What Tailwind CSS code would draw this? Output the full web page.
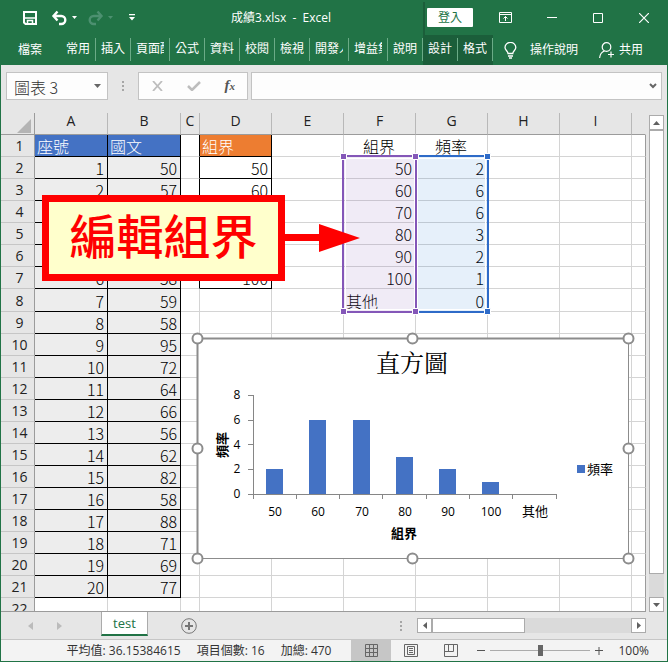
<!DOCTYPE html>
<html lang="zh-Hant">
<head>
  <meta charset="UTF-8">
  <meta name="viewport" content="width=device-width, initial-scale=1.0">
  <title>成績3.xlsx - Excel</title>
  <script src="https://cdn.jsdelivr.net/npm/@tailwindcss/browser@4"></script>
</head>
<body class="h-screen min-h-[640px] flex flex-col overflow-hidden border border-t-0 border-[#217346] bg-[#e6e6e6] font-['Open_Sans','Noto_Sans_CJK_TC',sans-serif] text-[12px] text-[#333]">

  <header class="bg-[#217346] text-white">
    <!-- Title bar -->
    <div class="flex items-center h-[35px]">
      <div class="flex items-center pl-[21px]">
        <button aria-label="儲存檔案" class="mr-[13px]">
          <svg width="16" height="16" viewBox="0 0 16 16" fill="none" stroke="#fff" stroke-width="2"><path d="M2 2h12v12H3.500L2 12.500z"/><path d="M2 8h12" stroke-width="1.500"/><path d="M5.500 14v-3.500h5V14" stroke-width="1.500"/></svg>
        </button>
        <button aria-label="復原" class="flex items-center gap-1 mr-[10px]">
          <svg width="17" height="16" viewBox="0 0 17 16" fill="none" stroke="#fff" stroke-width="2.400"><path d="M6.500 1.500L2.500 6l4 4.500M2.500 6h7.800a4 4 0 0 1 0 8H8"/></svg>
          <svg width="5" height="3" viewBox="0 0 5 3" fill="#fff"><path d="M0 0h5L2.500 3z"/></svg>
        </button>
        <button aria-label="重做" class="flex items-center gap-1 mr-4" disabled>
          <svg width="17" height="16" viewBox="0 0 17 16" fill="none" stroke="#4c9070" stroke-width="2.400"><path d="M10.500 1.500l4 4.500-4 4.500M14.500 6H6.700a4 4 0 0 0 0 8H9"/></svg>
          <svg width="5" height="3" viewBox="0 0 5 3" fill="#4c9070"><path d="M0 0h5L2.500 3z"/></svg>
        </button>
        <button aria-label="自訂快速存取工具列">
          <svg width="6" height="7" viewBox="0 0 6 7" fill="#fff"><path d="M0 0h6v1.300H0zM0 3h6L3 6.500z"/></svg>
        </button>
      </div>
      <h1 class="flex-1 pl-1 text-center whitespace-nowrap">成績3.xlsx&nbsp; -&nbsp; Excel</h1>
      <div class="flex items-center justify-end self-stretch">
        <span class="w-[2px] h-[33px] mt-[2px] mr-[2px] bg-[#1b5e3a]"></span>
        <button class="w-[46px] h-[19px] bg-white text-[#217346] leading-[19px] rounded-[1px]">登入</button>
        <button aria-label="功能區顯示選項" class="ml-[26px]">
          <svg width="13" height="11" viewBox="0 0 13 11" fill="none" stroke="#fff"><path d="M.5.5h12v10H.5zM.5 2.500h12M6.500 9V4.500M4.500 6.500l2-2 2 2"/></svg>
        </button>
        <button aria-label="最小化" class="ml-[35px]"><svg width="10" height="11" stroke="#fff"><path d="M0 5.500h10"/></svg></button>
        <button aria-label="最大化" class="ml-9"><svg width="10" height="10" fill="none" stroke="#fff"><path d="M.5.5h9v9h-9z"/></svg></button>
        <button aria-label="關閉" class="ml-9 mr-[18px]"><svg width="10" height="10" stroke="#fff" stroke-width="1.200"><path d="M0 0l10 10M10 0L0 10"/></svg></button>
      </div>
    </div>
    <!-- Ribbon tabs -->
    <nav class="flex h-[30px] leading-[28px] whitespace-nowrap">
      <button class="px-[17px]">檔案</button>
      <div id="tabs" class="flex pl-[7px]"></div>
      <button class="flex items-center gap-[13px] ml-[11px]">
        <svg width="13" height="17" viewBox="0 0 13 17" fill="none" stroke="#fff" stroke-width="1.300"><path d="M4 11.500C4 9 1 8.500 1 5.500a5.300 5 0 0 1 10.800 0c0 3-3 3.500-3 6zM4 14h5M5 16h3"/></svg>
        <span>操作說明</span>
      </button>
      <button class="flex items-center gap-1 ml-auto mr-6">
        <svg width="16" height="16" viewBox="0 0 16 16" fill="none" stroke="#fff" stroke-width="1.200"><circle cx="7.500" cy="5" r="4.300"/><path d="M.6 16c.3-3.500 2-6 4.900-7M12 9.500v6M9 12.500h6"/></svg>
        <span>共用</span>
      </button>
    </nav>
  </header>

  <!-- Formula bar -->
  <div class="flex items-center h-10 px-[5px] pt-[7px] pb-[6px]">
    <div class="flex items-center w-[102px] h-7 border border-[#c3c3c3] bg-[#fdfdfd]">
      <input aria-label="名稱方塊" value="圖表 3" class="flex-1 min-w-0 pl-[7px] pt-[2px] text-[16px] font-light outline-none font-['Noto_Sans_CJK_TC','Noto_Sans',sans-serif]">
      <button aria-label="名稱清單" class="px-[6px]"><svg width="7" height="4" fill="#666"><path d="M0 0h7L3.500 4z"/></svg></button>
    </div>
    <svg class="mx-[14px]" width="2" height="10" fill="#a6a6a6"><path d="M0 0h2v2H0zM0 4h2v2H0zM0 8h2v2H0z"/></svg>
    <div class="flex items-center justify-between w-[110px] h-7 pl-[13px] pr-3 border border-[#c3c3c3] bg-[#fdfdfd]">
      <button aria-label="取消"><svg width="11" height="10" stroke="#bdbdbd" stroke-width="1.800"><path d="M1 0l9 10M10 0L1 10"/></svg></button>
      <button aria-label="輸入"><svg width="14" height="10" fill="none" stroke="#bdbdbd" stroke-width="2.500"><path d="M1 5l4 4L13 1"/></svg></button>
      <button aria-label="插入函數" class="font-['Liberation_Serif',serif] italic font-bold text-[15px] leading-[20px] text-[#555]">f<span class="text-[11px]">x</span></button>
    </div>
    <div class="flex-1 flex items-center h-7 ml-[3px] border border-[#c3c3c3] bg-[#fdfdfd]">
      <input aria-label="資料編輯列" class="flex-1 min-w-0 px-1 outline-none text-[14px]">
      <button aria-label="展開資料編輯列" class="px-1"><svg width="8" height="6" fill="none" stroke="#666" stroke-width="2"><path d="M1 1l3 3 3-3"/></svg></button>
    </div>
  </div>

  <main class="flex-1 min-h-0 flex">
    <!-- Sheet -->
    <div class="relative flex-1 min-w-0 overflow-hidden border-b border-[#9b9b9b] pt-2">
      <table class="w-full table-fixed border-separate border-spacing-0">
        <colgroup>
          <col class="w-[34px]"><col class="w-[73px]"><col class="w-[73px]"><col class="w-[19px]">
          <col class="w-[72px]"><col class="w-[72px]"><col class="w-[72px]"><col class="w-[72px]"><col class="w-[72px]"><col class="w-[72px]"><col>
        </colgroup>
        <thead><tr id="letters"></tr></thead>
        <tbody id="cells" class="bg-white"></tbody>
      </table>

      <!-- Highlighted chart ranges F2:F8 and G2:G8 -->
      <svg class="absolute left-[339px] top-[48px]" width="152" height="162" viewBox="340 153 152 162">
        <path d="M344 157h71v154h-71z" fill="#8457b8" fill-opacity=".12"/>
        <path d="M416 157h71v154h-71z" fill="#1f77d0" fill-opacity=".11"/>
        <path d="M345.500 158.500h69v151h-69zM417.500 158.500h68v151h-68z" fill="none" stroke="#fff"/>
        <path d="M416 156h72v156h-72" fill="none" stroke="#2e6bc8" stroke-width="2"/>
        <path d="M343 156h73v156h-73z" fill="none" stroke="#8457b8" stroke-width="2"/>
        <g stroke="#fff">
          <path d="M340.500 153.500h6v6h-6zM412.500 153.500h6v6h-6zM340.500 308.500h6v6h-6zM412.500 308.500h6v6h-6z" fill="#8457b8"/>
          <path d="M484.500 153.500h6v6h-6zM484.500 308.500h6v6h-6z" fill="#2e6bc8"/>
        </g>
      </svg>

      <!-- Callout with arrow -->
      <div class="absolute left-[41px] top-[90px] flex items-center">
        <div class="w-[243px] h-[86px] border-[7px] border-[#f00] bg-[#ffc] text-center text-[47px] leading-[64px] font-medium text-[#f00] font-['Noto_Sans_CJK_TC',sans-serif]">編輯組界</div>
        <svg width="75" height="28" fill="#f00"><path d="M0 10h34V0l41 14-41 14V17H0z"/></svg>
      </div>

      <!-- Histogram -->
      <svg id="chart" class="absolute left-[190px] top-[227px] font-['Open_Sans','Noto_Sans_CJK_TC',sans-serif]" width="444" height="233" viewBox="191 332 444 233" font-size="12" fill="#000" text-anchor="middle">
        <path d="M197 338h432v220H197z" fill="#fff"/>
        <path d="M197 338.500h431M197.500 338v220" stroke="#8c8c8c" stroke-width="2"/>
        <path d="M197 558.500h432M628.500 338v220" stroke="#8c8c8c" fill="none"/>
        <text x="412" y="372" font-size="24" class="font-['Noto_Serif_CJK_TC','Noto_Sans_CJK_TC',serif]">直方圖</text>
        <g id="bars" fill="#4472c4"></g>
        <path d="M253.500 395v104M253 494.500h304M248 395.500h5M248 420.500h5M248 444.500h5M248 469.500h5M248 494.500h5M296.500 494v5M339.500 494v5M382.500 494v5M426.500 494v5M469.500 494v5M512.500 494v5M556.500 494v5" stroke="#868686" fill="none"/>
        <g id="labels"></g>
        <text x="404" y="538" font-size="13" font-weight="700">組界</text>
        <text transform="translate(227 445) rotate(-90)" font-size="13" font-weight="700">頻率</text>
        <path d="M577 465h8v8h-8z" fill="#4472c4"/>
        <text x="600" y="474" font-size="13">頻率</text>
        <g fill="#fff" stroke="#8c8c8c" stroke-width="2">
          <circle cx="197.500" cy="338.500" r="5"/><circle cx="412.500" cy="338.500" r="5"/><circle cx="628.500" cy="338.500" r="5"/>
          <circle cx="197.500" cy="448.500" r="5"/><circle cx="628.500" cy="448.500" r="5"/>
          <circle cx="197.500" cy="558.500" r="5"/><circle cx="412.500" cy="558.500" r="5"/><circle cx="628.500" cy="558.500" r="5"/>
        </g>
      </svg>
    </div>
    <!-- Vertical scrollbar -->
    <div class="flex flex-col w-[21px] pl-[3px] pr-[3px] pt-[10px]">
      <button aria-label="向上捲動" class="flex items-center justify-center h-[15px] border border-[#ababab] bg-white"><svg width="7" height="4" fill="#606060"><path d="M0 4h7L3.500 0z"/></svg></button>
      <div class="flex-1 bg-[#dadada]"><div class="h-[95%] border border-[#ababab] bg-white"></div></div>
      <button aria-label="向下捲動" class="flex items-center justify-center h-[15px] border border-[#ababab] bg-white"><svg width="7" height="4" fill="#606060"><path d="M0 0h7L3.500 4z"/></svg></button>
    </div>
  </main>

  <!-- Sheet tabs -->
  <div class="flex items-center h-[27px] pr-[21px]">
    <button aria-label="上一張工作表" class="ml-[27px]"><svg width="5" height="8" fill="#bbb"><path d="M5 0v8L0 4z"/></svg></button>
    <button aria-label="下一張工作表" class="ml-6"><svg width="5" height="8" fill="#bbb"><path d="M0 0v8l5-4z"/></svg></button>
    <button class="self-start w-[47px] h-[25px] -mt-px ml-[39px] border-x border-x-[#ababab] border-b-2 border-b-[#217346] bg-white text-[#217346] text-[13px] leading-[22px]">test</button>
    <button aria-label="新增工作表" class="ml-[33px]"><svg width="16" height="16" fill="none" stroke="#777"><circle cx="8" cy="8" r="7.300"/><path d="M8 4v8M4 8h8" stroke-width="2"/></svg></button>
    <svg class="ml-auto mr-[15px]" width="2" height="10" fill="#a6a6a6"><path d="M0 0h2v2H0zM0 4h2v2H0zM0 8h2v2H0z"/></svg>
    <div class="flex w-[229px] h-[15px] bg-[#dadada]">
      <button aria-label="向左捲動" class="flex items-center justify-center w-[15px] border border-[#ababab] bg-white"><svg width="4" height="7" fill="#606060"><path d="M4 0v7L0 3.500z"/></svg></button>
      <div class="w-[93px] border border-[#ababab] bg-white"></div>
      <button aria-label="向右捲動" class="flex items-center justify-center w-[15px] ml-auto border border-[#ababab] bg-white"><svg width="4" height="7" fill="#606060"><path d="M0 0v7l4-3.500z"/></svg></button>
    </div>
  </div>

  <!-- Status bar -->
  <footer class="flex items-center h-[22px] pr-[18px] border-t border-[#c6c6c6] bg-[#f3f3f3] whitespace-nowrap">
    <div class="flex-1 flex justify-end gap-4 pr-5">
      <span>平均值: 36.15384615</span><span>項目個數: 16</span><span>加總: 470</span>
    </div>
    <button aria-label="標準模式" class="flex items-center justify-center w-10 h-full bg-[#c6c6c6]"><svg width="13" height="13" fill="none" stroke="#666"><path d="M.5.5h12v12H.5zM.5 4.500h12M.5 8.500h12M4.500.5v12M8.500.5v12"/></svg></button>
    <button aria-label="整頁模式" class="flex items-center justify-center w-10 h-full"><svg width="14" height="13" fill="none" stroke="#666"><path d="M.5.5h13v12H.5zM3.500 2.500h7v8h-7zM5 4.500h4M5 6.500h4M5 8.500h4"/></svg></button>
    <button aria-label="分頁預覽" class="flex items-center justify-center w-10 h-full"><svg width="14" height="13" fill="none" stroke="#666"><path d="M.5.5h13v12H.5zM4.500.5v7M9.500.5v7M.5 7.500h9"/></svg></button>
    <button aria-label="縮小" class="ml-[6px]"><svg width="8" height="8" stroke="#555"><path d="M0 3.500h8"/></svg></button>
    <input type="range" aria-label="顯示比例" min="0" max="100" value="50" class="w-[100px] h-[11px] mx-[5px] appearance-none bg-[linear-gradient(#ababab,#ababab)] bg-[length:100%_1px] bg-center bg-no-repeat [&::-webkit-slider-thumb]:appearance-none [&::-webkit-slider-thumb]:w-[5px] [&::-webkit-slider-thumb]:h-[11px] [&::-webkit-slider-thumb]:bg-[#666]">
    <button aria-label="放大"><svg width="8" height="8" stroke="#555"><path d="M0 3.500h8M4 0v8"/></svg></button>
    <span class="ml-[15px]">100%</span>
  </footer>

  <script>
    const tabs = ["常用", "插入", "頁面配置", "公式", "資料", "校閱", "檢視", "開發人員", "增益集", "說明", "設計", "格式"];
    const scores = [50, 57, 45, 65, 68, 58, 59, 58, 95, 72, 64, 66, 56, 62, 82, 58, 88, 71, 69, 77];
    const bins = ["50", "60", "70", "80", "90", "100", "其他"];
    const counts = [2, 6, 6, 3, 2, 1, 0];

    document.getElementById("tabs").innerHTML = tabs.map((name, i) => `
      <button class="${i > 9 ? "bg-[#1b5e3a]" : ""} flex items-start h-[30px] ${i ? "pl-[5px]" : "pl-0"}">
        <span class="block overflow-hidden text-left ${name.length > 2 ? "w-[28px]" : "w-[24px]"}">${name}</span>
        <span class="w-px h-[23px] mt-[3px] ml-[5px] bg-[#6bab87]"></span>
      </button>`).join("");

    // Column letters; the first cell is the select-all corner
    document.getElementById("letters").innerHTML =
      `<th class="h-[22px] border-r border-b border-[#9b9b9b]"><svg class="ml-auto mr-[3px] mt-1" width="14" height="14" fill="#b4b4b4"><path d="M14 0v14H0z"/></svg></th>` +
      [..."ABCDEFGHI", ""].map(c => `<th class="h-[22px] align-top border-b border-r ${c ? "border-r-[#b8b8b8]" : "border-r-transparent"} border-b-[#9b9b9b] font-normal text-[14px] leading-[16px] text-[#222]">${c}</th>`).join("");

    function cellText(col, r) {
      if (r === 1) return { A: "座號", B: "國文", D: "組界", F: "組界", G: "頻率" }[col] || "";
      if (col === "A" && r < 22) return r - 1;
      if (col === "B" && r < 22) return scores[r - 2];
      if (col === "D" && r < 8) return bins[r - 2];
      if (col === "F" && r < 9) return bins[r - 2];
      if (col === "G" && r < 9) return counts[r - 2];
      return "";
    }

    function cellClass(col, r) {
      const table = ("AB".includes(col) && r < 22) || (col === "D" && r < 8);
      let c = table ? "border-b-black border-r-black " : "border-b-[#d4d4d4] ";
      if (!table) c += col === "C" && r < 8 ? "border-r-black " : col === "J" ? "border-r-[#9b9b9b] " : "border-r-[#d4d4d4] ";
      if (r === 1 && table) c += col === "D" ? "bg-[#ed7d31] text-white " : "bg-[#4472c4] text-white ";
      else c += table && col !== "D" ? "bg-[#ededed] text-black " : "text-black ";
      if (r === 1) c += "FG".includes(col) ? "text-center " : "text-left ";
      else c += isNaN(cellText(col, r)) ? "text-left " : "text-right ";
      return c;
    }

    let html = "";
    for (let r = 1; r <= 22; r++) {
      const h = r === 8 ? "h-[23px]" : "h-[22px]";
      html += `<tr><th class="${h} pt-px pl-1 border-r border-r-[#9b9b9b] border-b border-b-[#c6c6c6] bg-[#e6e6e6] font-normal text-[14px] leading-[20px] text-[#222]">${r}</th>`;
      for (const col of "ABCDEFGHIJ") {
        html += `<td class="${h} ${cellClass(col, r)} border-r border-b pt-px pl-[2px] pr-[3px] text-[16px] leading-[20px] font-light font-['Noto_Sans_CJK_TC','Noto_Sans',sans-serif]">${cellText(col, r)}</td>`;
      }
      html += "</tr>";
    }
    document.getElementById("cells").innerHTML = html;

    // Chart bars and axis labels
    const step = 303 / 7, unit = 99 / 8;
    document.getElementById("bars").innerHTML = counts.map((n, i) =>
      `<rect x="${Math.round(266 + i * step)}" y="${Math.round(494 - n * unit)}" width="17" height="${Math.round(n * unit)}"/>`).join("");
    document.getElementById("labels").innerHTML =
      bins.map((b, i) => `<text x="${Math.round(275 + i * step)}" y="516" font-size="${isNaN(b) ? 13 : 12}">${b}</text>`).join("") +
      [0, 2, 4, 6, 8].map(v => `<text x="237" y="${Math.round(498 - v * unit)}">${v}</text>`).join("");
  </script>
</body>
</html>
